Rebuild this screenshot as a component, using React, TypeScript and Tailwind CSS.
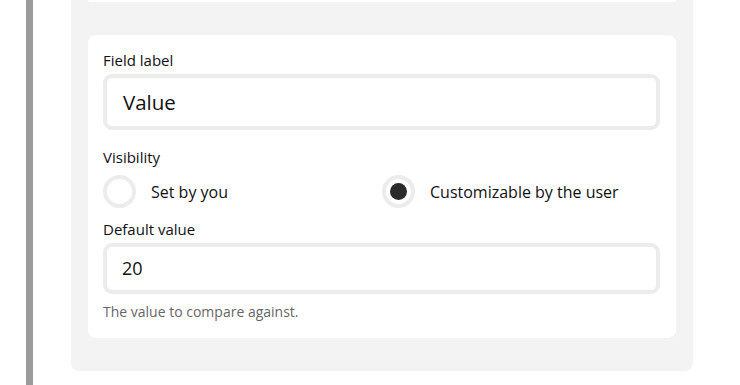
import React from "react";

function Radio({ checked, label }: { checked: boolean; label: string }) {
  return (
    <div className="flex items-center">
      <div className="w-[33px] h-[33px] rounded-full border-[4px] border-[#ececec] bg-white flex items-center justify-center">
        {checked && <div className="w-[17px] h-[17px] rounded-full bg-[#2b2b2b]" />}
      </div>
      <span className="ml-[15px] text-[16px] leading-[20px] text-[#111]">{label}</span>
    </div>
  );
}

export default function App() {
  return (
    <div
      className="w-[740px] h-[385px] bg-white flex overflow-hidden"
      style={{ fontFamily: "'Open Sans', 'Noto Sans', sans-serif" }}
    >
      <div className="w-[26px] shrink-0" />
      <div className="w-[7px] shrink-0 bg-[#9b9b9b] h-full" />
      <div className="w-[38px] shrink-0" />
      <div className="w-[622px] shrink-0 h-[371px] bg-[#f3f3f3] rounded-b-[8px] px-[17px] flex flex-col">
        <div className="h-[2px] bg-white rounded-b-[6px]" />
        <div className="mt-[33px] bg-white rounded-[8px] h-[303px] px-[15px] pr-[16px] pt-[15px] flex flex-col">
          <div className="text-[15px] leading-[20px] text-[#111]">Field label</div>
          <div className="mt-[4px] h-[56px] rounded-[9px] border-[4px] border-[#ececec] flex items-center pl-[16px] text-[20.5px] text-[#111]">
            Value
          </div>
          <div className="mt-[17px] text-[15px] leading-[20px] text-[#111]">Visibility</div>
          <div className="mt-[8px] flex">
            <div className="w-[279px]">
              <Radio checked={false} label="Set by you" />
            </div>
            <Radio checked={true} label="Customizable by the user" />
          </div>
          <div className="mt-[11px] text-[15px] leading-[20px] text-[#111]">Default value</div>
          <div className="mt-[4px] h-[51px] rounded-[9px] border-[4px] border-[#ececec] flex items-center pl-[15px] text-[18px] text-[#111]">
            20
          </div>
          <div className="mt-[9px] text-[14px] leading-[18px] text-[#666]">The value to compare against.</div>
        </div>
      </div>
    </div>
  );
}
